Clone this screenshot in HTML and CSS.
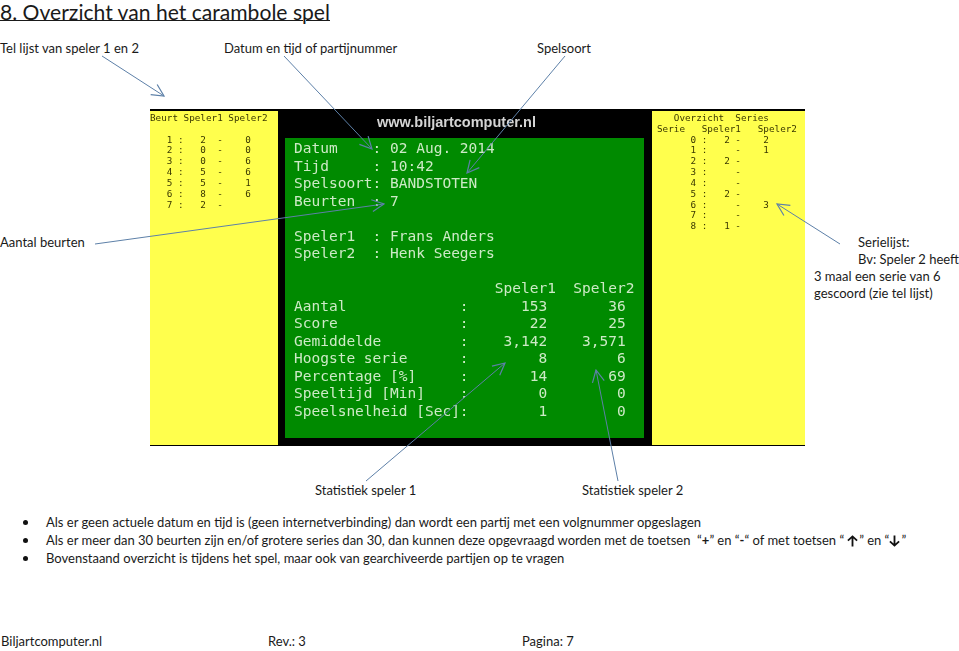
FILE: index.html
```html
<!doctype html>
<html>
  <head>
    <meta charset="utf-8">
    <title>Overzicht van het carambole spel</title>
    <link rel="stylesheet" href="styles.css">
  </head>
  <body>
    <h1 class="title">8. Overzicht van het carambole spel</h1>

    <div class="top-labels">
      <span class="label-lijst">Tel lijst van speler 1 en 2</span>
      <span class="label-datum">Datum en tijd of partijnummer</span>
      <span class="label-soort">Spelsoort</span>
    </div>

    <div class="middle">
      <div class="note-left">Aantal beurten</div>

      <div class="shot">
        <pre class="side side-left">Beurt Speler1 Speler2

   1 :   2  -    0
   2 :   0  -    0
   3 :   0  -    6
   4 :   5  -    6
   5 :   5  -    1
   6 :   8  -    6
   7 :   2  -</pre>
        <div class="centre">
          <div class="site">www.biljartcomputer.nl</div>
          <pre class="board">Datum    : 02 Aug. 2014
Tijd     : 10:42
Spelsoort: BANDSTOTEN
Beurten  : 7

Speler1  : Frans Anders
Speler2  : Henk Seegers

                       Speler1  Speler2
Aantal             :      153       36
Score              :       22       25
Gemiddelde         :    3,142    3,571
Hoogste serie      :        8        6
Percentage [%]     :       14       69
Speeltijd [Min]    :        0        0
Speelsnelheid [Sec]:        1        0</pre>
        </div>
        <pre class="side side-right">   Overzicht  Series
Serie   Speler1   Speler2
      0 :   2 -    2
      1 :     -    1
      2 :   2 -
      3 :     -
      4 :     -
      5 :   2 -
      6 :     -    3
      7 :     -
      8 :   1 -</pre>
      </div>

      <div class="note-right">
        <div class="indent">Serielijst:</div>
        <div class="indent">Bv: Speler 2 heeft</div>
        <div>3 maal een serie van 6</div>
        <div>gescoord (zie tel lijst)</div>
      </div>
    </div>

    <div class="stat-labels">
      <span class="stat-one">Statistiek speler 1</span>
      <span>Statistiek speler 2</span>
    </div>

    <ul class="notes">
      <li>Als er geen actuele datum en tijd is (geen internetverbinding) dan wordt een partij met een volgnummer opgeslagen</li>
      <li>Als er meer dan 30 beurten zijn en/of grotere series dan 30, dan kunnen deze opgevraagd worden met de toetsen &nbsp;“<b>+</b>” en “<b>-</b>“ of met toetsen “<svg class="key key-up" viewBox="0 0 12 12"><path d="M6 12V1M1 5.6 6 1l5 4.6"/></svg>” en “<svg class="key" viewBox="0 0 12 12"><path d="M6 0v11M1 6.4 6 11l5-4.6"/></svg>”</li>
      <li>Bovenstaand overzicht is tijdens het spel, maar ook van gearchiveerde partijen op te vragen</li>
    </ul>

    <div class="footer">
      <span class="foot-site">Biljartcomputer.nl</span>
      <span class="foot-rev">Rev.: 3</span>
      <span>Pagina: 7</span>
    </div>

    <svg class="arrows" viewBox="0 0 959 651">
      <defs>
        <marker id="head" markerUnits="userSpaceOnUse" markerWidth="16" markerHeight="16" refX="15" refY="8" orient="auto">
          <path d="M3 2 15 8 3 14" fill="none" stroke="#5d80a8" stroke-width="1.2"/>
        </marker>
      </defs>
      <line x1="102" y1="56" x2="164" y2="96"/>
      <line x1="284" y1="56" x2="372" y2="149"/>
      <line x1="565" y1="56" x2="467" y2="173"/>
      <line x1="95" y1="244" x2="384" y2="204"/>
      <line x1="840" y1="244" x2="777" y2="204"/>
      <line x1="366" y1="481" x2="505" y2="363"/>
      <line x1="618" y1="481" x2="596" y2="370"/>
    </svg>
  </body>
</html>
```

FILE: styles.css
```css
* {
  box-sizing: border-box;
}

html {
  height: 100%;
}

body {
  margin: 0;
  width: 959px;
  height: 651px;
  position: relative;
  background-color: #fff;
  color: #1a1a1a;
  font-family: "Lato", sans-serif;
  font-size: 13px;
  line-height: 18px;
}

.title {
  margin: 0;
  height: 39px;
  font-size: 21.1px;
  line-height: 24px;
  font-weight: 400;
  text-decoration: underline;
  text-decoration-thickness: 1px;
  text-underline-offset: 0;
}

.top-labels {
  display: flex;
  height: 70px;
}

.label-lijst {
  width: 224px;
}

.label-datum {
  width: 313px;
}

/* middle row: note, photographed screen, note */
.middle {
  display: grid;
  grid-template-columns: 150px 655px 1fr;
  height: 337px;
}

.note-left {
  padding-top: 124px;
}

.note-right {
  padding: 125px 0 0 9px;
  line-height: 17px;
}

.indent {
  padding-left: 44px;
}

.shot {
  display: flex;
  background-color: #000;
  padding: 2px 0 1px;
  filter: blur(0.35px);
}

.side {
  margin: 0;
  background-color: #ffff4d;
  color: #3a3800;
  font-family: "DejaVu Sans Mono", monospace;
  font-size: 9.3px;
  line-height: 10.83px;
  padding-top: 2px;
}

.side-left {
  width: 128px;
}

.side-right {
  width: 153px;
  padding-left: 5px;
}

.centre {
  flex: 1;
  padding: 0 8px 0 7px;
}

.site {
  height: 27px;
  padding-right: 16px;
  text-align: center;
  color: #d4d4d4;
  font-family: "Liberation Sans", sans-serif;
  font-size: 14.5px;
  font-weight: 700;
  line-height: 22px;
}

.board {
  margin: 0;
  height: 300px;
  padding: 2px 0 0 9px;
  background-color: #008a00;
  color: #cdeac6;
  font-family: "DejaVu Sans Mono", monospace;
  font-size: 14.5px;
  line-height: 17.5px;
}

.stat-labels {
  display: flex;
  height: 32px;
  padding: 35px 0 0 315px;
}

.stat-one {
  width: 267px;
}

.notes {
  margin: 32px 0 0;
  padding: 0 0 0 23px;
  list-style: none;
}

.notes li {
  height: 18px;
  white-space: nowrap;
}

.notes li::before {
  content: "";
  display: inline-block;
  width: 5px;
  height: 5px;
  margin: 0 18px 2px 0;
  border-radius: 50%;
  background-color: #111;
  vertical-align: middle;
}

.key {
  width: 11px;
  height: 12px;
  margin-right: 1px;
  vertical-align: -2px;
  fill: none;
  stroke: #111;
  stroke-width: 2;
}

.key-up {
  margin-left: 3px;
}

.footer {
  display: flex;
  margin-top: 65px;
  padding-left: 1px;
}

.foot-site {
  width: 267px;
}

.foot-rev {
  width: 254px;
}

/* callout arrows lie over everything */
.arrows {
  position: absolute;
  left: 0;
  top: 0;
  width: 959px;
  height: 651px;
  pointer-events: none;
}

.arrows line {
  stroke: #5d80a8;
  stroke-width: 1;
  marker-end: url(#head);
}
```
